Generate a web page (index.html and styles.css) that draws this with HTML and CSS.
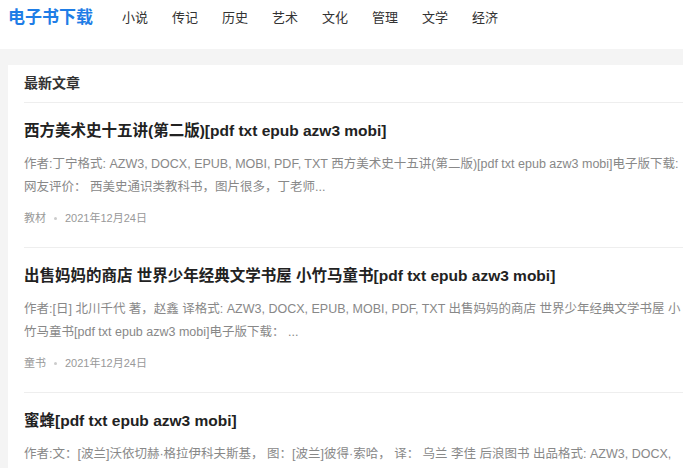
FILE: index.html
```html
<!DOCTYPE html>
<html lang="zh-CN">
<head>
<meta charset="utf-8">
<title>电子书下载</title>
<link rel="stylesheet" href="styles.css">
</head>
<body>
<header class="topbar">
  <a class="logo" href="#">电子书下载</a>
  <nav class="nav">
    <a href="#">小说</a>
    <a href="#">传记</a>
    <a href="#">历史</a>
    <a href="#">艺术</a>
    <a href="#">文化</a>
    <a href="#">管理</a>
    <a href="#">文学</a>
    <a href="#">经济</a>
  </nav>
</header>
<main class="page">
  <section class="card">
    <h2 class="card-title">最新文章</h2>
    <article class="post">
      <h3 class="post-title"><a href="#">西方美术史十五讲(第二版)[pdf txt epub azw3 mobi]</a></h3>
      <p class="post-desc">作者:丁宁格式: AZW3, DOCX, EPUB, MOBI, PDF, TXT 西方美术史十五讲(第二版)[pdf txt epub azw3 mobi]电子版下载: 网友评价： 西美史通识类教科书，图片很多，丁老师...</p>
      <div class="post-meta"><span>教材</span><span class="dot"></span><span>2021年12月24日</span></div>
    </article>
    <article class="post">
      <h3 class="post-title"><a href="#">出售妈妈的商店 世界少年经典文学书屋 小竹马童书[pdf txt epub azw3 mobi]</a></h3>
      <p class="post-desc">作者:[日] 北川千代 著，赵鑫 译格式: AZW3, DOCX, EPUB, MOBI, PDF, TXT 出售妈妈的商店 世界少年经典文学书屋 小竹马童书[pdf txt epub azw3 mobi]电子版下载： ...</p>
      <div class="post-meta"><span>童书</span><span class="dot"></span><span>2021年12月24日</span></div>
    </article>
    <article class="post">
      <h3 class="post-title"><a href="#">蜜蜂[pdf txt epub azw3 mobi]</a></h3>
      <p class="post-desc">作者:文：[波兰]沃依切赫·格拉伊科夫斯基， 图：[波兰]彼得·索哈， 译： 乌兰 李佳 后浪图书 出品格式: AZW3, DOCX, EPUB, MOBI, PDF, TXT 蜜蜂[pdf txt epub azw3 mobi]电子版下载：...</p>
      <div class="post-meta"><span>科普</span><span class="dot"></span><span>2021年12月24日</span></div>
    </article>
  </section>
</main>
</body>
</html>
```

FILE: styles.css
```css
html {
  overflow: hidden;
}

body {
  margin: 0;
  background: #f4f4f4;
  font-family: "Liberation Sans", "Noto Sans CJK SC", sans-serif;
  color: #333;
}

a {
  color: inherit;
  text-decoration: none;
}

.topbar {
  display: flex;
  align-items: flex-start;
  height: 49px;
  padding: 0 8px;
  background: #fff;
  box-sizing: border-box;
}

.logo {
  font-size: 17px;
  font-weight: bold;
  line-height: 36px;
  color: #1e7de6;
  margin-right: 29px;
}

.nav {
  display: flex;
  gap: 24px;
}

.nav a {
  font-size: 13px;
  line-height: 36px;
  color: #333;
}

.page {
  padding: 16px 0 0 8px;
}

.card {
  width: 684px;
  background: #fff;
  padding: 0 0 0 16px;
  box-sizing: border-box;
}

.card-title {
  margin: 0;
  height: 37px;
  line-height: 37px;
  font-size: 14px;
  font-weight: bold;
  color: #333;
  border-bottom: 1px solid #eee;
}

.post {
  padding: 16px 8px 20px 0;
  border-bottom: 1px solid #eee;
}

.post-title {
  margin: 0;
  font-size: 15.5px;
  line-height: 24px;
  font-weight: bold;
  color: #222;
}

.post-desc {
  margin: 10px 0 0;
  font-size: 12.5px;
  line-height: 23px;
  color: #888;
}

.post-meta {
  display: flex;
  align-items: center;
  margin-top: 10px;
  font-size: 11px;
  line-height: 18px;
  color: #999;
}

.dot {
  width: 3px;
  height: 3px;
  border-radius: 50%;
  background: #ccc;
  margin: 0 8px;
}
```
